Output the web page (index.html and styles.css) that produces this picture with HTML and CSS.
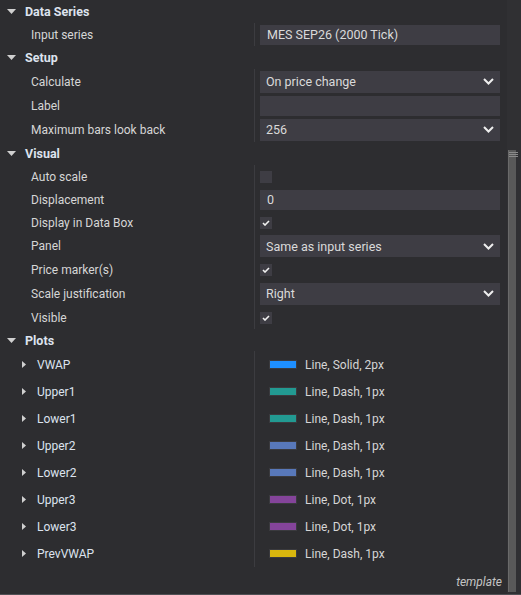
FILE: index.html
```html
<!DOCTYPE html>
<html lang="en">

<head>
    <meta charset="UTF-8">
    <title>Indicator properties</title>
    <link rel="stylesheet" href="styles.css">
</head>

<body>
    <div class="wrap">
        <main class="grid">

            <div class="cat"><svg class="down" width="9" height="5"><polygon points="0,0 9,0 4.5,5" /></svg>Data Series</div>
            <div class="row">
                <div class="name">Input series</div>
                <div class="val"><div class="box">MES SEP26 (2000 Tick)</div></div>
            </div>

            <div class="cat"><svg class="down" width="9" height="5"><polygon points="0,0 9,0 4.5,5" /></svg>Setup</div>
            <div class="row tall">
                <div class="name">Calculate</div>
                <div class="val"><div class="box drop">On price change<svg width="11" height="7"><polyline points="1,1 5.5,5.5 10,1" /></svg></div></div>
            </div>
            <div class="row">
                <div class="name">Label</div>
                <div class="val"><div class="box"></div></div>
            </div>
            <div class="row tall">
                <div class="name">Maximum bars look back</div>
                <div class="val"><div class="box drop">256<svg width="11" height="7"><polyline points="1,1 5.5,5.5 10,1" /></svg></div></div>
            </div>

            <div class="cat"><svg class="down" width="9" height="5"><polygon points="0,0 9,0 4.5,5" /></svg>Visual</div>
            <div class="row">
                <div class="name">Auto scale</div>
                <div class="val"><span class="check"></span></div>
            </div>
            <div class="row">
                <div class="name">Displacement</div>
                <div class="val"><div class="box">0</div></div>
            </div>
            <div class="row">
                <div class="name">Display in Data Box</div>
                <div class="val"><span class="check on"><svg width="8" height="6"><polyline points="1,3 3,5 7,1" /></svg></span></div>
            </div>
            <div class="row mid">
                <div class="name">Panel</div>
                <div class="val"><div class="box drop">Same as input series<svg width="11" height="7"><polyline points="1,1 5.5,5.5 10,1" /></svg></div></div>
            </div>
            <div class="row">
                <div class="name">Price marker(s)</div>
                <div class="val"><span class="check on"><svg width="8" height="6"><polyline points="1,3 3,5 7,1" /></svg></span></div>
            </div>
            <div class="row tall">
                <div class="name">Scale justification</div>
                <div class="val"><div class="box drop">Right<svg width="11" height="7"><polyline points="1,1 5.5,5.5 10,1" /></svg></div></div>
            </div>
            <div class="row">
                <div class="name">Visible</div>
                <div class="val"><span class="check on"><svg width="8" height="6"><polyline points="1,3 3,5 7,1" /></svg></span></div>
            </div>

            <div class="cat short"><svg class="down" width="9" height="5"><polygon points="0,0 9,0 4.5,5" /></svg>Plots</div>
            <section id="plots" class="plots"></section>

            <div class="foot">template</div>
        </main>

        <aside class="scroll">
            <div class="thumb">
                <span></span><span></span><span></span>
            </div>
        </aside>
    </div>

    <template>
        <div class="row plot">
            <div class="name"><svg class="right" width="4" height="7"><polygon points="0,0 4,3.5 0,7" /></svg><span class="pname"></span></div>
            <div class="val"><span class="swatch"></span><span class="pdesc"></span></div>
        </div>
    </template>

    <script>
        const plots = [
            { navn: "VWAP", farve: "#1e8fff", tekst: "Line, Solid, 2px" },
            { navn: "Upper1", farve: "#229a92", tekst: "Line, Dash, 1px" },
            { navn: "Lower1", farve: "#229a92", tekst: "Line, Dash, 1px" },
            { navn: "Upper2", farve: "#5878ba", tekst: "Line, Dash, 1px" },
            { navn: "Lower2", farve: "#5878ba", tekst: "Line, Dash, 1px" },
            { navn: "Upper3", farve: "#84449a", tekst: "Line, Dot, 1px" },
            { navn: "Lower3", farve: "#84449a", tekst: "Line, Dot, 1px" },
            { navn: "PrevVWAP", farve: "#d8b60e", tekst: "Line, Dash, 1px" }
        ];

        const templatePointer = document.querySelector("template");
        const listPointer = document.querySelector("#plots");

        plots.forEach(plot => {
            const klon = templatePointer.cloneNode(true).content;
            klon.querySelector(".pname").textContent = plot.navn;
            klon.querySelector(".pdesc").textContent = plot.tekst;
            klon.querySelector(".swatch").style.backgroundColor = plot.farve;
            listPointer.appendChild(klon);
        });
    </script>
</body>

</html>
```

FILE: styles.css
```css
body {
    margin: 0;
    background-color: #2d2d30;
    font-family: "Roboto", "Liberation Sans", sans-serif;
    font-size: 12px;
    color: #d6d6d6;
}

.wrap {
    display: flex;
    height: 595px;
    border-bottom: 1px solid #505054;
    box-sizing: border-box;
}

.grid {
    width: 507px;
    display: flex;
    flex-direction: column;
}

.cat {
    height: 23px;
    display: flex;
    align-items: center;
    padding-left: 7px;
    font-weight: bold;
    font-size: 12.5px;
    color: #dde3ee;
}

.cat.short {
    height: 22px;
}

.cat .down {
    fill: #d0d0d0;
    margin-right: 9px;
}

.row {
    display: flex;
    height: 23px;
}

.row.tall {
    height: 25px;
}

.row.mid {
    height: 24px;
}

.name {
    width: 254px;
    padding-left: 31px;
    box-sizing: border-box;
    display: flex;
    align-items: center;
}

.val {
    flex: 1;
    border-left: 1px solid #3c3c40;
    padding: 0 7px 0 5px;
    display: flex;
    align-items: center;
}

.box {
    flex: 1;
    height: 20px;
    background-color: #3e3d44;
    display: flex;
    align-items: center;
    padding: 0 7px;
    color: #dadada;
    font-size: 12.5px;
}

.drop {
    height: 22px;
    padding: 0 6px 0 6px;
    justify-content: space-between;
}

.drop svg {
    fill: none;
    stroke: #eeeeee;
    stroke-width: 2;
}

.check {
    width: 12px;
    height: 12px;
    background-color: #3e3d44;
    display: flex;
    align-items: center;
    justify-content: center;
}

.check svg {
    fill: none;
    stroke: #f0f0f0;
    stroke-width: 1.6;
}

.plots {
    display: flex;
    flex-direction: column;
}

.plot {
    height: 27px;
}

.plot .name {
    padding-left: 22px;
    color: #dce3ee;
}

.plot .right {
    fill: #d0d0d0;
    margin-right: 11px;
}

.swatch {
    width: 26px;
    height: 7px;
    border: 1px solid #3a3a3e;
    margin-left: 9px;
    margin-right: 8px;
}

.plots .row:last-child {
    height: 32px;
    align-items: flex-start;
}

.plots .row:last-child .name,
.plots .row:last-child .val {
    height: 27px;
}

.foot {
    text-align: right;
    font-style: italic;
    font-size: 12px;
    color: #c4c4c4;
    padding-right: 5px;
    margin-top: 3px;
}

.scroll {
    flex: 1;
    background-color: #303033;
    padding-left: 1px;
}

.thumb {
    width: 7px;
    height: 440px;
    margin-top: 150px;
    background-color: #595959;
    border-left: 1px solid #6a6a6a;
    display: flex;
    flex-direction: column;
    gap: 1px;
    padding-top: 2px;
}

.thumb span {
    width: 9px;
    height: 1px;
    background-color: #8a8a8a;
}
```
